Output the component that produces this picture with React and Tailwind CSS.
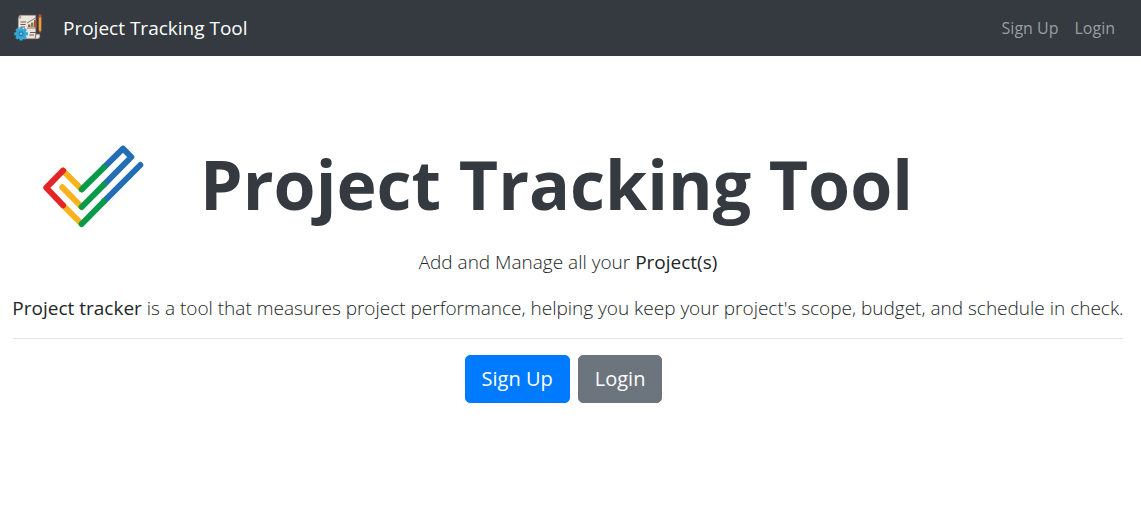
function ProjectIcon() {
  const teeth = [0, 45, 90, 135, 180, 225, 270, 315];
  return (
    <svg viewBox="0 0 30 30" className="size-[30px] shrink-0" aria-hidden="true">
      <path d="M6.500 2H23V24.500H25.500Q25 26 23 26H8Q5 25.500 5 22V5Z" fill="#ebe4da" stroke="#5b514b" strokeWidth=".9" />
      <path d="M23 21H27V24Q27 26 24.500 26H22Z" fill="#ebe4da" stroke="#5b514b" strokeWidth=".7" />
      <path d="M5 5.500L8 2V5.500Z" fill="#a99b90" />
      <path d="M7.500 9H13M7.500 11.500H12.500M8 14H12M17 19.500H23M16.500 22H21" stroke="#68605b" strokeWidth="1" />
      <path d="M15 14V11.500H17.500V14Z" fill="#b64f3d" />
      <path d="M18 14V9.500H20.500V14Z" fill="#718c4d" />
      <path d="M21 14V7H23.500V14Z" fill="#b64f3d" />
      <path d="M14 15H24M14 10L22.500 5" stroke="#68605b" strokeWidth=".8" />
      <path d="M25.500 4H28.500V17L27 20L25.500 17Z" fill="#ee9c3a" stroke="#72503a" strokeWidth=".7" />
      <path d="M25.500 2Q27 0 28.500 2V4H25.500Z" fill="#b84c3c" />
      <g fill="#35a7d7">
        {teeth.map((a) => (
          <rect key={a} x="6.500" y="14" width="3.200" height="3.500" rx=".6" transform={`rotate(${a} 8.100 20.800)`} />
        ))}
        <circle cx="8.100" cy="20.800" r="5.200" />
      </g>
      <circle cx="8.100" cy="20.800" r="2.600" fill="#257da8" />
      <circle cx="8.100" cy="20.800" r="1.300" fill="#6cc7e9" />
    </svg>
  );
}

function CheckLogo() {
  return (
    <svg viewBox="0 0 102 84" className="h-[84px] w-[102px] shrink-0" fill="none" strokeWidth="6" strokeLinecap="round" strokeLinejoin="round" aria-hidden="true">
      <g stroke="#f9b21d">
        <path d="M21 26.700L39.700 45.300" />
        <path d="M20.300 43.300L39.700 63" />
        <path d="M21 61.300L39.700 80" />
      </g>
      <path d="M21 26.700L4.300 43.700L21 61.300" stroke="#e42527" />
      <path d="M62 23.300L81 4.700L89.300 13L62 40.700M62 57.300L98.300 21" stroke="#226db4" />
      <g stroke="#089949">
        <path d="M39.700 45.300L62 23.300" />
        <path d="M39.700 63L62 40.700" />
        <path d="M39.700 80L62 57.300" />
      </g>
    </svg>
  );
}

export default function App() {
  return (
    <div className="bg-white font-['Segoe_UI','Open_Sans',sans-serif] text-[#212529]">
      <nav className="flex h-14 items-center justify-between bg-[#343a40] pr-[26px] pl-[13px]">
        <a href="#home" className="flex items-center gap-5 text-[19px] text-white">
          <ProjectIcon />
          <span>Project Tracking Tool</span>
        </a>
        <div className="flex gap-4 text-base text-[#9a9da0]">
          <a href="#signup">Sign Up</a>
          <a href="#login">Login</a>
        </div>
      </nav>
      <main className="pr-[18px] pl-[13px] pt-[74px] text-center">
        <div className="flex items-center gap-14 pl-[29px]">
          <CheckLogo />
          <h1 className="pb-1 text-[68px] leading-[108px] font-bold text-[#343a40]">Project Tracking Tool</h1>
        </div>
        <div className="-mx-2 mt-[5px] space-y-4 text-[19px] leading-[30px] font-light">
          <p>
            Add and Manage all your <b className="font-normal">Project(s)</b>
          </p>
          <p>
            <b className="font-normal">Project tracker</b> is a tool that measures project performance, helping you keep your project's scope, budget, and schedule in check.
          </p>
        </div>
        <hr className="mt-[15px] border-[#e5e5e5]" />
        <div className="mt-4 flex justify-center gap-2 pr-[9px] text-xl text-white">
          <button type="button" className="h-12 rounded-[5px] border border-[#007bff] bg-[#007bff] px-4">Sign Up</button>
          <button type="button" className="h-12 rounded-[5px] border border-[#6c757d] bg-[#6c757d] px-4">Login</button>
        </div>
      </main>
    </div>
  );
}
